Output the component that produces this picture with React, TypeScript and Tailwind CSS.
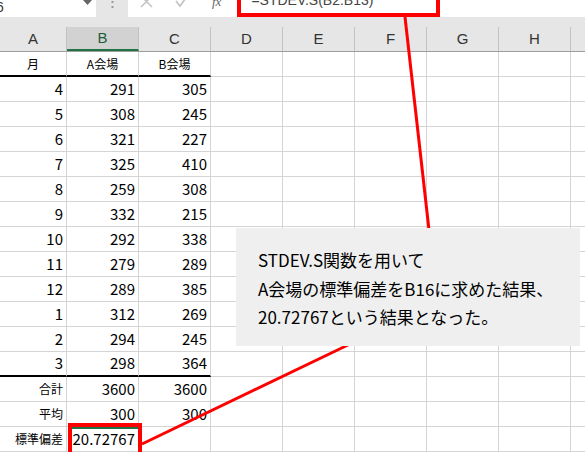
const cols = ["A", "B", "C", "D", "E", "F", "G", "H"];

const data = [
  ["4", "291", "305"],
  ["5", "308", "245"],
  ["6", "321", "227"],
  ["7", "325", "410"],
  ["8", "259", "308"],
  ["9", "332", "215"],
  ["10", "292", "338"],
  ["11", "279", "289"],
  ["12", "289", "385"],
  ["1", "312", "269"],
  ["2", "294", "245"],
  ["3", "298", "364"],
  ["合計", "3600", "3600"],
  ["平均", "300", "300"],
  ["標準偏差", "20.72767", ""],
];

const font = { fontFamily: '"Noto Sans CJK JP", "Liberation Sans", sans-serif' };
const sans = { fontFamily: '"Liberation Sans", sans-serif' };

function Row({ cells, thick, label }: { cells: string[]; thick?: boolean; label?: boolean }) {
  return (
    <div className="flex h-[25px]">
      {cols.map((c, i) => {
        const v = cells[i] ?? "";
        const isLabel = label || (i === 0 && isNaN(Number(v)));
        return (
          <div
            key={c}
            className={`${i === 0 ? "w-[67px]" : "w-[72px]"} shrink-0 h-full border-r border-[#d4d4d4] flex items-center ${
              thick && i < 3 ? "border-b-2 border-b-black" : "border-b"
            } ${label ? "justify-center text-[12px]" : isLabel ? "justify-end pr-[3px] text-[12px]" : "justify-end pr-[3px] text-[15px]"} text-black`}
          >
            {v}
          </div>
        );
      })}
      <div className="flex-1 border-b border-[#d4d4d4]" />
    </div>
  );
}

export default function App() {
  return (
    <div className="relative w-[585px] h-[452px] overflow-hidden bg-white" style={font}>
      {/* formula bar, top edge cropped */}
      <div className="h-[27px] bg-[#e6e6e6]">
        <div className="flex h-[17px] items-end overflow-hidden">
          <div className="w-[96px] h-full bg-white flex items-end justify-between pr-[4px] overflow-hidden">
            <span className="-ml-[21px] text-[14px] leading-[16px] mb-[2px] text-[#333]" style={sans}>
              B16
            </span>
            <svg className="self-start" width="9" height="6" viewBox="0 0 9 6">
              <path d="M0 0 H9 L4.5 5 Z" fill="#666" />
            </svg>
          </div>
          <div className="w-[32px] h-full flex justify-center">
            <svg width="3" height="12" viewBox="0 0 3 12">
              <rect x="0.5" y="1" width="2" height="2" fill="#9a9a9a" />
              <rect x="0.5" y="6" width="2" height="2" fill="#9a9a9a" />
            </svg>
          </div>
          <div className="flex-1 h-full bg-white flex items-end pl-[12px] overflow-hidden">
            <svg className="mb-[9px]" width="13" height="13" viewBox="0 0 13 13">
              <path d="M1 1 L12 12 M12 1 L1 12" stroke="#c4c4c4" strokeWidth="1.6" />
            </svg>
            <svg className="ml-[22px] mb-[9px]" width="14" height="13" viewBox="0 0 14 13">
              <path d="M1 6 L5 11 L13 0" stroke="#c4c4c4" strokeWidth="1.8" fill="none" />
            </svg>
            <span className="ml-[23px] mb-[8px] text-[13px] leading-[14px] italic text-[#666]" style={{ fontFamily: '"Liberation Serif", serif' }}>
              fx
            </span>
            <span className="ml-[30px] mb-[9px] text-[14px] leading-[16px] text-[#444]" style={sans}>
              =STDEV.S(B2:B13)
            </span>
          </div>
        </div>
      </div>

      {/* column headers */}
      <div className="flex h-[25px] bg-[#e6e6e6] border-b border-[#9e9e9e]" style={sans}>
        {cols.map((c, i) => (
          <div
            key={c}
            className={`${i === 0 ? "w-[67px]" : "w-[72px]"} shrink-0 border-r border-[#c2c2c2] flex items-center justify-center text-[15px] ${
              c === "B" ? "bg-[#d2d2d2] text-[#1e5e3a] border-b-2 border-b-[#217346]" : "text-[#333]"
            }`}
          >
            {c}
          </div>
        ))}
        <div className="flex-1" />
      </div>

      {/* grid */}
      <Row cells={["月", "A会場", "B会場"]} thick label />
      {data.map((r, i) => (
        <Row key={i} cells={r} thick={i === 11} />
      ))}

      {/* annotations */}
      <svg className="absolute left-0 top-0 pointer-events-none" width="585" height="452">
        <line x1="405" y1="17" x2="429" y2="230" stroke="#ff0000" strokeWidth="3" />
        <line x1="350" y1="344" x2="142" y2="444" stroke="#ff0000" strokeWidth="3" />
      </svg>

      <div className="absolute left-[237px] top-[-10px] w-[203px] h-[27px] border-4 border-[#ff0000]" />

      <div className="absolute left-[68px] top-[423px] w-[74px] h-[40px] border-4 border-[#ff0000]">
        <div className="h-[2px] bg-[#217346]" />
      </div>

      <div className="absolute left-[236px] top-[228px] w-[344px] h-[118px] bg-[#efefef] pl-[22px] pt-[18px] text-[17px] leading-[28.5px] text-black">
        <div>STDEV.S関数を用いて</div>
        <div>A会場の標準偏差をB16に求めた結果、</div>
        <div>20.72767という結果となった。</div>
      </div>
    </div>
  );
}
